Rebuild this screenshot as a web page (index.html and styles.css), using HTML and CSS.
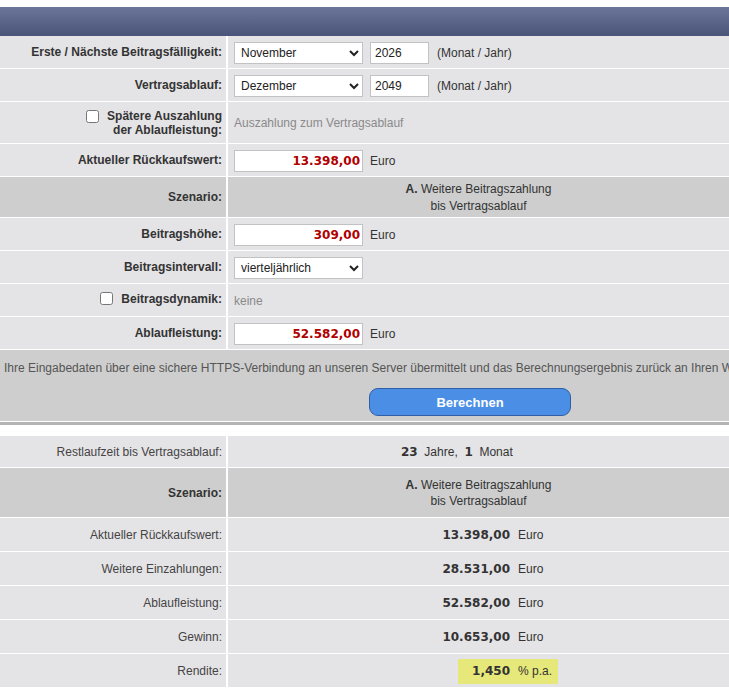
FILE: index.html
```html
<!DOCTYPE html>
<html lang="de">

<head>
    <meta charset="UTF-8">
    <meta name="viewport" content="width=device-width, initial-scale=1.0">
    <title>Rückkaufswert-Rechner</title>
    <link rel="stylesheet" href="styles.css">
</head>

<body>
    <div class="page">
        <div class="head"></div>

        <table class="calc">
            <tr>
                <th>Erste / Nächste Beitragsfälligkeit:</th>
                <td>
                    <div class="field">
                        <select class="month">
                            <option>Januar</option>
                            <option>Februar</option>
                            <option>März</option>
                            <option>April</option>
                            <option>Mai</option>
                            <option>Juni</option>
                            <option>Juli</option>
                            <option>August</option>
                            <option>September</option>
                            <option>Oktober</option>
                            <option selected>November</option>
                            <option>Dezember</option>
                        </select>
                        <input type="text" class="year" value="2026">
                        <span>(Monat / Jahr)</span>
                    </div>
                </td>
            </tr>
            <tr>
                <th>Vertragsablauf:</th>
                <td>
                    <div class="field">
                        <select class="month">
                            <option>Januar</option>
                            <option>Februar</option>
                            <option>März</option>
                            <option>April</option>
                            <option>Mai</option>
                            <option>Juni</option>
                            <option>Juli</option>
                            <option>August</option>
                            <option>September</option>
                            <option>Oktober</option>
                            <option>November</option>
                            <option selected>Dezember</option>
                        </select>
                        <input type="text" class="year" value="2049">
                        <span>(Monat / Jahr)</span>
                    </div>
                </td>
            </tr>
            <tr class="tall">
                <th>
                    <label class="chk chk-top">
                        <input type="checkbox">
                        <span>Spätere Auszahlung<br>der Ablaufleistung:</span>
                    </label>
                </th>
                <td class="muted">Auszahlung zum Vertragsablauf</td>
            </tr>
            <tr>
                <th>Aktueller Rückkaufswert:</th>
                <td>
                    <div class="field">
                        <input type="text" class="amount" value="13.398,00">
                        <span>Euro</span>
                    </div>
                </td>
            </tr>
            <tr class="scenario">
                <th>Szenario:</th>
                <td><b>A.</b> Weitere Beitragszahlung<br>bis Vertragsablauf</td>
            </tr>
            <tr>
                <th>Beitragshöhe:</th>
                <td>
                    <div class="field">
                        <input type="text" class="amount" value="309,00">
                        <span>Euro</span>
                    </div>
                </td>
            </tr>
            <tr>
                <th>Beitragsintervall:</th>
                <td>
                    <select class="month">
                        <option>monatlich</option>
                        <option selected>vierteljährlich</option>
                        <option>halbjährlich</option>
                        <option>jährlich</option>
                    </select>
                </td>
            </tr>
            <tr>
                <th>
                    <label class="chk">
                        <input type="checkbox">
                        <span>Beitragsdynamik:</span>
                    </label>
                </th>
                <td class="muted">keine</td>
            </tr>
            <tr>
                <th>Ablaufleistung:</th>
                <td>
                    <div class="field">
                        <input type="text" class="amount" value="52.582,00">
                        <span>Euro</span>
                    </div>
                </td>
            </tr>
        </table>

        <div class="submit">
            <p class="note">Ihre Eingabedaten über eine sichere HTTPS-Verbindung an unseren Server übermittelt und das Berechnungsergebnis zurück an Ihren Webbrowser gesendet.</p>
            <div class="actions">
                <button type="button" class="calc-btn">Berechnen</button>
            </div>
        </div>

        <table class="result">
            <tr class="first">
                <th>Restlaufzeit bis Vertragsablauf:</th>
                <td class="term"><b>23</b>&nbsp; Jahre,&nbsp; <b>1</b>&nbsp; Monat</td>
            </tr>
            <tr class="scenario">
                <th>Szenario:</th>
                <td><b>A.</b> Weitere Beitragszahlung<br>bis Vertragsablauf</td>
            </tr>
            <tr>
                <th>Aktueller Rückkaufswert:</th>
                <td><span class="pair"><span class="num">13.398,00</span><span>Euro</span></span></td>
            </tr>
            <tr>
                <th>Weitere Einzahlungen:</th>
                <td><span class="pair"><span class="num">28.531,00</span><span>Euro</span></span></td>
            </tr>
            <tr>
                <th>Ablaufleistung:</th>
                <td><span class="pair"><span class="num">52.582,00</span><span>Euro</span></span></td>
            </tr>
            <tr>
                <th>Gewinn:</th>
                <td><span class="pair"><span class="num">10.653,00</span><span>Euro</span></span></td>
            </tr>
            <tr>
                <th>Rendite:</th>
                <td><span class="pair hl"><span class="num">1,450</span><span>% p.a.</span></span></td>
            </tr>
        </table>
    </div>
</body>

</html>
```

FILE: styles.css
```css
body {
    margin: 0;
    font-family: "Liberation Sans", Arial, sans-serif;
    font-size: 12px;
    color: #333;
    background: #fff;
    overflow: hidden;
}

.page {
    width: 729px;
    padding-top: 7px;
}

.head {
    height: 29px;
    background: linear-gradient(#6c759a, #4a5378);
}

table {
    width: 100%;
    border-collapse: separate;
    border-spacing: 0;
}

tr {
    height: 33px;
}

th,
td {
    background: #e4e3e6;
    border-bottom: 1px solid #fff;
    padding: 0;
    vertical-align: middle;
}

th {
    width: 222px;
    padding-right: 4px;
    border-right: 2px solid #fff;
    text-align: right;
    font-weight: bold;
}

td {
    padding-left: 6px;
    padding-top: 1px;
    text-align: left;
}

.tall {
    height: 42px;
}

.field {
    display: flex;
    align-items: center;
    gap: 7px;
}

select,
input[type="text"] {
    box-sizing: border-box;
    height: 22px;
    border: 1px solid #c2c2c2;
    border-radius: 0;
    background: #fff;
    font-family: "Liberation Sans", Arial, sans-serif;
    font-size: 12px;
    color: #222;
    margin: 0;
}

.month {
    width: 129px;
    padding: 0 2px;
}

.year {
    width: 59px;
    padding: 0 4px;
}

.year + span {
    margin-left: 1px;
}

.amount {
    width: 129px;
    padding: 0 2px;
    text-align: right;
    font-family: "DejaVu Sans", Verdana, sans-serif !important;
    font-weight: bold;
    color: #b00000 !important;
}

.muted {
    color: #8a8a8a;
}

.chk {
    display: inline-flex;
    align-items: center;
    gap: 8px;
}

.chk input {
    width: 13px;
    height: 13px;
    margin: 0;
}

.chk-top {
    align-items: flex-start;
    line-height: 14px;
}

.chk-top input {
    margin-top: 1px;
}

.scenario {
    height: 41px;
}

.scenario th,
.scenario td {
    background: #cecece;
}

.scenario td {
    padding-left: 0;
    text-align: center;
    line-height: 17px;
}

.submit {
    background: #cecece;
    height: 71px;
    overflow: hidden;
    border-bottom: 1px solid #fff;
    box-shadow: 0 3px 0 #b4b4b4;
}

.note {
    margin: 0;
    padding: 11px 0 0 4px;
    line-height: 14px;
    white-space: nowrap;
    color: #555;
}

.actions {
    padding: 13px 0 0 369px;
}

.calc-btn {
    width: 202px;
    height: 28px;
    background: #4a8ee6;
    border: 1px solid #2e5ea6;
    border-radius: 9px;
    color: #fff;
    font-family: "Liberation Sans", Arial, sans-serif;
    font-size: 13px;
    font-weight: bold;
    cursor: pointer;
}

.result {
    margin-top: 14px;
}

.result tr {
    height: 34px;
}

.result tr.first {
    height: 32px;
}

.result tr.scenario {
    height: 50px;
}

.result th {
    font-weight: normal;
    color: #444;
}

.result .scenario th {
    font-weight: bold;
    color: #333;
}

.result .scenario td {
    line-height: 16px;
}

.result td {
    padding-left: 200px;
}

.result .scenario td {
    padding-left: 0;
}

.result td.term {
    padding-left: 173px;
}

.result b,
.num {
    font-family: "DejaVu Sans", Verdana, sans-serif;
    font-weight: bold;
    color: #333;
}

.result .scenario b {
    font-family: "Liberation Sans", Arial, sans-serif;
}

.pair {
    display: inline-flex;
    align-items: center;
    gap: 8px;
}

.num {
    width: 82px;
    text-align: right;
}

.hl {
    margin-left: 30px;
    height: 25px;
    padding-right: 6px;
    background: #e6e87a;
}

.hl .num {
    width: 52px;
}
```
